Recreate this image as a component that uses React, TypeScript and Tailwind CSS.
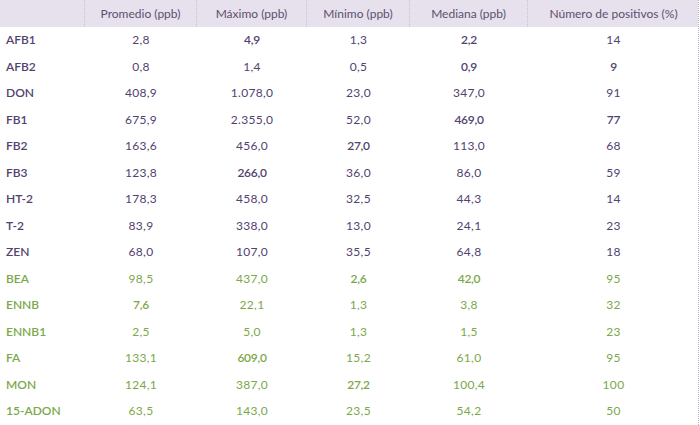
const HEADERS = ["Promedio (ppb)", "Máximo (ppb)", "Mínimo (ppb)", "Mediana (ppb)", "Número de positivos (%)"];

type Row = { name: string; green?: boolean; values: string[]; bold?: number[] };

const ROWS: Row[] = [
  { name: "AFB1", values: ["2,8", "4,9", "1,3", "2,2", "14"], bold: [1, 3] },
  { name: "AFB2", values: ["0,8", "1,4", "0,5", "0,9", "9"], bold: [3, 4] },
  { name: "DON", values: ["408,9", "1.078,0", "23,0", "347,0", "91"] },
  { name: "FB1", values: ["675,9", "2.355,0", "52,0", "469,0", "77"], bold: [3, 4] },
  { name: "FB2", values: ["163,6", "456,0", "27,0", "113,0", "68"], bold: [2] },
  { name: "FB3", values: ["123,8", "266,0", "36,0", "86,0", "59"], bold: [1] },
  { name: "HT-2", values: ["178,3", "458,0", "32,5", "44,3", "14"] },
  { name: "T-2", values: ["83,9", "338,0", "13,0", "24,1", "23"] },
  { name: "ZEN", values: ["68,0", "107,0", "35,5", "64,8", "18"] },
  { name: "BEA", green: true, values: ["98,5", "437,0", "2,6", "42,0", "95"], bold: [2, 3] },
  { name: "ENNB", green: true, values: ["7,6", "22,1", "1,3", "3,8", "32"], bold: [0] },
  { name: "ENNB1", green: true, values: ["2,5", "5,0", "1,3", "1,5", "23"] },
  { name: "FA", green: true, values: ["133,1", "609,0", "15,2", "61,0", "95"], bold: [1] },
  { name: "MON", green: true, values: ["124,1", "387,0", "27,2", "100,4", "100"], bold: [2] },
  { name: "15-ADON", green: true, values: ["63,5", "143,0", "23,5", "54,2", "50"] },
];

const GRID = "grid grid-cols-[85px_112px_110px_103px_118px_171px]";

export default function App() {
  return (
    <div className="w-[700px] h-[425px] bg-white overflow-hidden font-['Lato','Open_Sans',sans-serif] text-[12px]">
      <div className="w-[699px] border-r border-dotted border-[#b9b2c6] h-full">
        <div className={`${GRID} h-[27px] bg-[#e6e1ec] text-[#5d5070]`}>
          <div className="border-r border-dotted border-[#c9c2d3]" />
          {HEADERS.map((h, i) => (
            <div
              key={h}
              className={`flex items-center justify-center ${i < HEADERS.length - 1 ? "border-r border-dotted border-[#c9c2d3]" : ""}`}
            >
              {h}
            </div>
          ))}
        </div>
        {ROWS.map((r) => (
          <div
            key={r.name}
            className={`${GRID} h-[26.5px] items-center ${r.green ? "text-[#7ba84a]" : "text-[#514271]"}`}
          >
            <div className="pl-[6px] font-semibold">{r.name}</div>
            {r.values.map((v, i) => (
              <div
                key={i}
                className={`text-center ${r.bold?.includes(i) ? "font-semibold tracking-[-0.3px]" : "tracking-[0.3px]"}`}
              >
                {v}
              </div>
            ))}
          </div>
        ))}
      </div>
    </div>
  );
}
